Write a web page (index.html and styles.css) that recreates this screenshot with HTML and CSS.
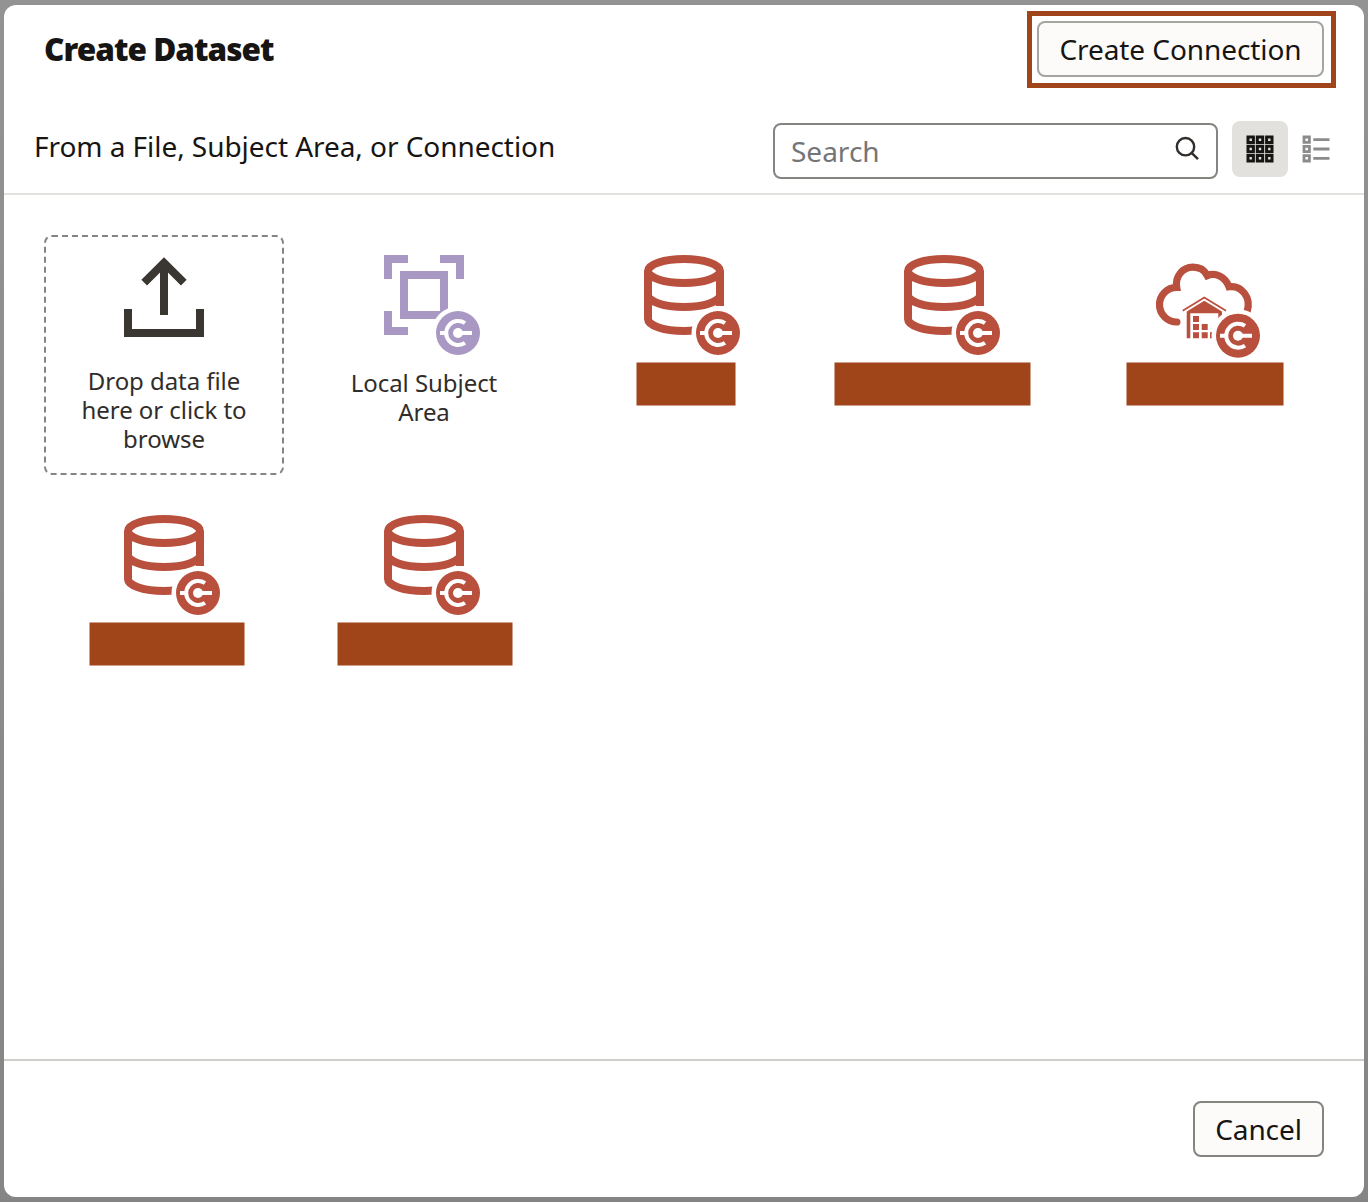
FILE: index.html
```html
<!DOCTYPE html>
<html lang="en">
<head>
<meta charset="utf-8">
<title>Create Dataset</title>
<link rel="stylesheet" href="styles.css">
</head>
<body>
<svg class="defs" aria-hidden="true">
  <symbol id="badge" viewBox="-27 -27 54 54">
    <circle r="26.500" fill="#fff"/>
    <circle r="22" fill="currentColor"/>
    <path d="M7 -9.9A12 12 0 1 0 7 9.9M-18 0H-12M0 0H14" fill="none" stroke="#fff" stroke-width="4"/>
    <circle r="5" fill="#fff"/>
  </symbol>
  <symbol id="database" viewBox="0 0 240 127">
    <g fill="none" stroke="currentColor" stroke-width="8">
      <ellipse cx="120" cy="36" rx="36" ry="12"/>
      <path d="M156 36V71M84 36V84A36 12 0 0 0 120 96Q126 96 132 95.300M84 60A36 12 0 0 0 156 60"/>
    </g>
    <use href="#badge" x="127" y="71" width="54" height="54"/>
  </symbol>
</svg>
<main class="dialog">
  <header class="head">
    <h1 class="title">Create Dataset</h1>
    <div class="highlight"><button class="btn btn-connection">Create Connection</button></div>
  </header>
  <section class="toolbar">
    <h2 class="subtitle">From a File, Subject Area, or Connection</h2>
    <div class="search">
      <span class="placeholder">Search</span>
      <svg width="28" height="28" viewBox="0 0 28 28" fill="none" stroke="#312d2a" stroke-width="2.4"><circle cx="12.500" cy="11.700" r="8.700"/><path d="M18.600 17.800L25 24.200"/></svg>
    </div>
    <button class="view view-active" aria-label="Grid view">
      <svg width="28" height="28" viewBox="0 0 28 28" fill="none" stroke="#161513" stroke-width="3"><path d="M2 2h5.400v5.400h-5.400zM11.300 2h5.400v5.400h-5.400zM20.600 2h5.400v5.400h-5.400zM2 11.300h5.400v5.400h-5.400zM11.300 11.300h5.400v5.400h-5.400zM20.600 11.300h5.400v5.400h-5.400zM2 20.600h5.400v5.400h-5.400zM11.300 20.600h5.400v5.400h-5.400zM20.600 20.600h5.400v5.400h-5.400z"/></svg>
    </button>
    <button class="view" aria-label="List view">
      <svg width="28" height="28" viewBox="0 0 28 28" fill="none" stroke="#8b8b8b" stroke-width="2.800"><path d="M2 2h5.400v5.400h-5.400zM2 11.300h5.400v5.400h-5.400zM2 20.600h5.400v5.400h-5.400zM11.300 4.700H27.500M11.300 14H27.500M11.300 23.300H27.500"/></svg>
    </button>
  </section>
  <section class="tiles">
    <div class="tile drop">
      <svg class="icon" viewBox="0 0 240 127"><path d="M120 80V26M100.200 47.700L120 27.900L139.800 47.700M84 74V98H156V74" fill="none" stroke="#3a3631" stroke-width="8"/></svg>
      <p class="label label-drop">Drop data file here or click to browse</p>
    </div>
    <div class="tile subject">
      <svg class="icon" viewBox="0 0 240 127"><path d="M84 44V24H104M136 24H156V44M84 76V96H104M100 40H140V80H100Z" fill="none" stroke="currentColor" stroke-width="8"/><use href="#badge" x="127" y="71" width="54" height="54"/></svg>
      <p class="label label-subject">Local Subject Area</p>
    </div>
    <div class="tile"><svg class="icon"><use href="#database"/></svg><div class="bar bar-a"></div></div>
    <div class="tile"><svg class="icon"><use href="#database"/></svg><div class="bar bar-b"></div></div>
    <div class="tile">
      <svg class="icon" viewBox="0 0 240 127">
        <path d="M92.900 87A17.300 17.300 0 0 1 92.700 52.400C91 42 98 32.200 109 32.200C115 32.200 120.500 35 123.300 40.600C131 37.500 141 41 145 51.800C157 50 168 62 163 77" fill="none" stroke="currentColor" stroke-width="7.200" stroke-linecap="round"/>
        <path d="M98.700 75.700L120.300 62.600L142 75.700" fill="none" stroke="currentColor" stroke-width="1.800"/>
        <path d="M102.700 76.500L120.300 65.700L138 76.500V86H134.300V78.300H106.300V103.300H102.700ZM109 81h6v6h-6zM109 89h6v6h-6zM117.700 89h6v6h-6zM109 97.300h6v6h-6zM117.700 97.300h6v6h-6zM126 97.300h2v6h-2z" fill="currentColor"/>
        <use href="#badge" x="127" y="73.700" width="54" height="54"/>
      </svg>
      <div class="bar bar-c"></div>
    </div>
    <div class="tile"><svg class="icon"><use href="#database"/></svg><div class="bar bar-d"></div></div>
    <div class="tile"><svg class="icon"><use href="#database"/></svg><div class="bar bar-e"></div></div>
  </section>
  <footer class="foot"><button class="btn btn-cancel">Cancel</button></footer>
</main>
</body>
</html>
```
FILE: styles.css
```css
* { box-sizing: border-box; }
body {
  margin: 0;
  height: 1202px;
  padding: 5px 4px;
  background: linear-gradient(#939393, #8d8c8a 50%, #858585);
  font-family: "Noto Sans", sans-serif;
  color: #161513;
}
.defs { display: none; }
.dialog {
  display: flex;
  flex-direction: column;
  height: 1192px;
  background: #fff;
  border-radius: 12px;
}
.head {
  display: flex;
  justify-content: space-between;
  height: 105px;
  padding: 6px 28px 0 40px;
}
.title {
  margin: 16px 0 0;
  font-size: 31.500px;
  line-height: 43px;
  font-weight: 900;
  letter-spacing: -0.950px;
}
.highlight {
  width: 309px;
  height: 77px;
  padding: 5px;
  border: 5px solid #a0451a;
}
.btn {
  display: block;
  height: 56px;
  padding: 0;
  border: 2px solid #858481;
  border-radius: 8px;
  background: #fcfbfa;
  font: 28px/52px "Noto Sans", sans-serif;
  letter-spacing: -0.080px;
  color: #161513;
}
.btn-connection { width: 287px; border-color: #a5a4a1; }
.btn-cancel { width: 131px; }
.toolbar {
  display: flex;
  align-items: flex-start;
  height: 85px;
  padding: 11px 20px 0 30px;
  border-bottom: 2px solid #e3e1de;
}
.subtitle {
  margin: 4px 0 0;
  flex: 1;
  font-size: 28px;
  line-height: 42px;
  font-weight: 400;
  letter-spacing: -0.050px;
  white-space: nowrap;
}
.search {
  display: flex;
  align-items: center;
  justify-content: space-between;
  width: 445px;
  height: 56px;
  margin: 2px 14px 0 0;
  padding: 0 15px 0 16px;
  border: 2px solid #858481;
  border-radius: 8px;
}
.search svg { margin-bottom: 5px; }
.placeholder { font-size: 28px; line-height: 52px; color: #757575; }
.view {
  display: flex;
  align-items: center;
  justify-content: center;
  width: 56px;
  height: 56px;
  padding: 0;
  border: 0;
  border-radius: 8px;
  background: none;
}
.view-active { background: #e3e1dd; }
.tiles {
  flex: 1;
  display: grid;
  grid-template-columns: repeat(5, 240px);
  grid-auto-rows: 240px;
  gap: 20px;
  padding: 40px;
}
.tile { color: #b94f3d; }
.icon { display: block; width: 240px; height: 127px; overflow: visible; }
.drop {
  border: 2px dashed #858481;
  border-radius: 8px;
}
.drop .icon { margin: -2px 0 0 -2px; }
.subject { color: #a998c4; }
.label {
  margin: 0 auto;
  font-size: 24px;
  line-height: 29px;
  letter-spacing: -0.060px;
  text-align: center;
  color: #312d2a;
}
.label-drop { width: 180px; padding-top: 4px; }
.label-subject { width: 180px; padding-top: 6px; }
.bar { height: 43px; background: #a0451a; transform: translate(-0.500px, 0.500px); }
.bar-a { width: 99px; margin-left: 73px; }
.bar-b { width: 196px; margin-left: 11px; }
.bar-c { width: 157px; margin-left: 43px; }
.bar-d { width: 155px; margin-left: 46px; }
.bar-e { width: 175px; margin-left: 34px; }
.foot {
  display: flex;
  justify-content: flex-end;
  height: 138px;
  padding: 40px 40px 0;
  border-top: 2px solid #d0cecb;
}
```
